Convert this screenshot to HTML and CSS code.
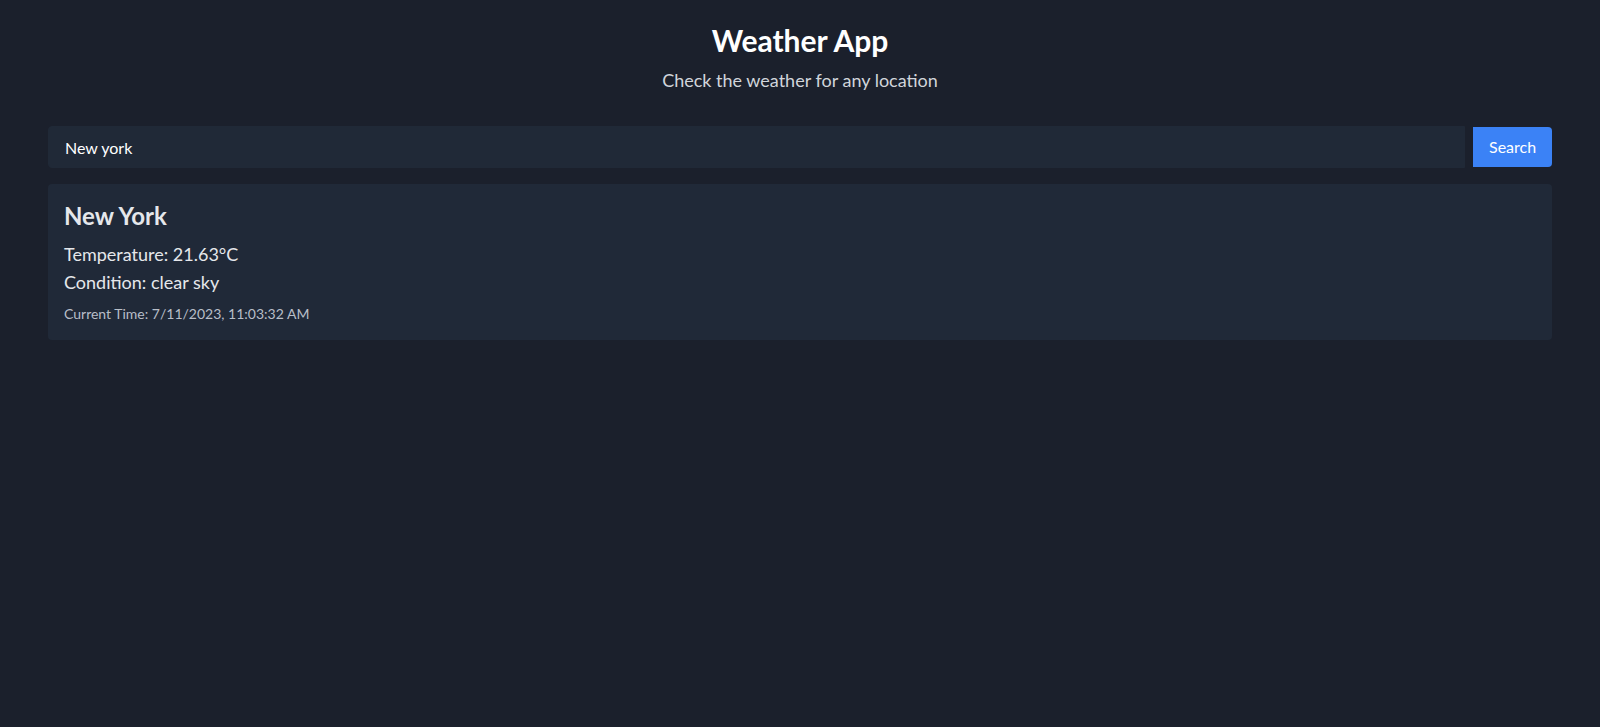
FILE: index.html
```html
<!DOCTYPE html>
<html lang="en">
<head>
<meta charset="utf-8">
<title>Weather App</title>
<link rel="stylesheet" href="styles.css">
</head>
<body>
<div class="app">
  <header class="header">
    <h1 class="title">Weather App</h1>
    <p class="subtitle">Check the weather for any location</p>
  </header>
  <form class="search">
    <input class="search-input" type="text" value="New york">
    <button class="search-btn" type="button">Search</button>
  </form>
  <section class="card">
    <h2 class="city">New York</h2>
    <p class="line">Temperature: 21.63°C</p>
    <p class="line">Condition: clear sky</p>
    <p class="time">Current Time: 7/11/2023, 11:03:32 AM</p>
  </section>
</div>
</body>
</html>
```
FILE: styles.css
```css
* { box-sizing: border-box; }
html, body { margin: 0; padding: 0; }
body {
  background: #1b202c;
  color: #e5e7eb;
  font-family: Lato, "Open Sans", sans-serif;
  min-height: 100vh;
}
.app {
  padding: 22px 48px 0;
}
.header {
  text-align: center;
  margin-bottom: 32px;
}
.title {
  margin: 0 0 8px;
  font-size: 30px;
  line-height: 36px;
  font-weight: 700;
  color: #ffffff;
}
.subtitle {
  margin: 0;
  font-size: 18px;
  line-height: 28px;
  color: #d1d5db;
}
.search {
  display: flex;
  align-items: center;
  gap: 8px;
  margin: 0 0 16px;
}
.search-input {
  flex: 1;
  height: 42px;
  padding: 8px 16px;
  border: 1px solid #202937;
  border-radius: 4px 0 0 4px;
  background: #202937;
  color: #ffffff;
  font-family: inherit;
  font-size: 16px;
  line-height: 24px;
  outline: none;
}
.search-btn {
  height: 40px;
  width: 79px;
  padding: 8px 16px;
  border: none;
  border-radius: 0 4px 4px 0;
  background: #3b82f6;
  color: #ffffff;
  font-family: inherit;
  font-size: 16px;
  line-height: 24px;
}
.card {
  background: #202938;
  border-radius: 4px;
  padding: 16px;
}
.city {
  margin: 0 0 8px;
  font-size: 24px;
  line-height: 32px;
  font-weight: 700;
  color: #e5e7eb;
}
.line {
  margin: 0;
  font-size: 18px;
  line-height: 28px;
  color: #e5e7eb;
}
.time {
  margin: 8px 0 0;
  font-size: 14px;
  line-height: 20px;
  color: #b8bec8;
}
```
